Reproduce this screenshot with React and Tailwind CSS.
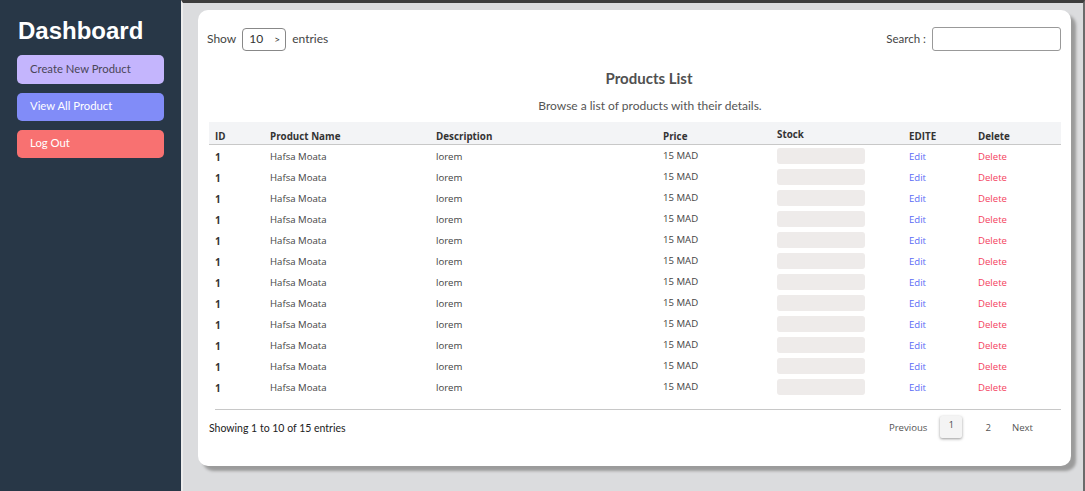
import React from "react";

const rows = Array.from({ length: 12 }, () => ({
  id: 1,
  name: "Hafsa Moata",
  desc: "lorem",
  price: "15 MAD",
}));

const cols = "grid grid-cols-[55px_166px_227px_114px_132px_69px_1fr] px-[6px]";

const Sidebar = () => (
  <aside className="w-[181px] shrink-0 bg-[#283747] px-[17px] pt-[17px] font-['Liberation_Sans',sans-serif]">
    <h1 className="text-[24px] font-bold leading-[28px] text-white pl-[1px]">Dashboard</h1>
    <div className="mt-[10px] flex flex-col gap-[9px] font-['Lato',sans-serif] text-[11.3px]">
      <button className="h-[29px] w-full rounded-[5px] bg-[#c4b5fd] pb-[1px] pl-[13px] text-left text-[#4a4658]">
        Create New Product
      </button>
      <button className="h-[28px] w-full rounded-[5px] bg-[#818cf8] pb-[1px] pl-[13px] text-left text-white">
        View All Product
      </button>
      <button className="h-[28px] w-full rounded-[5px] bg-[#f87171] pb-[1px] pl-[13px] text-left text-white">
        Log Out
      </button>
    </div>
  </aside>
);

export default function App() {
  return (
    <div className="flex h-[491px] w-[1085px] overflow-hidden">
      <Sidebar />
      <main className="flex-1 border-l-2 border-t-[3px] border-r-2 border-l-[#ececec] border-t-[#3d3d3d] border-r-[#6b6b6b] bg-[#dbdcde] pl-[15px] pt-[7px]">
        <div className="flex h-[456px] w-[873px] flex-col rounded-[10px] bg-white pl-[11px] pr-[10px] pt-[17px] shadow-[5px_5px_3px_#9b9b9b]">
          <div className="-ml-[2px] flex items-center justify-between font-['Lato',sans-serif] text-[12px] text-[#444]">
            <div className="flex items-center gap-[6px]">
              <span>Show</span>
              <div className="flex h-[23px] w-[44px] items-center gap-[11px] rounded-[4px] border border-[#888] pl-[6px] text-[12px] text-[#333]">
                <span>10</span>
                <span className="text-[10px]">&gt;</span>
              </div>
              <span>entries</span>
            </div>
            <div className="flex items-center gap-[6px]">
              <span className="text-[11.5px]">Search :</span>
              <input className="h-[24px] w-[129px] rounded-[3px] border border-[#999] outline-none" />
            </div>
          </div>

          <h2 className="mt-[16px] pl-[28px] text-center font-['Lato',sans-serif] text-[15px] font-bold text-[#505050]">
            Products List
          </h2>
          <p className="mt-[7px] pl-[30px] text-center font-['Lato',sans-serif] text-[12px] text-[#555]">
            Browse a list of products with their details.
          </p>

          <div className="mt-[7px] font-['Open_Sans',sans-serif] text-[9.6px]">
            <div className={`${cols} h-[23px] items-center border-b border-[#c8c8c8] bg-[#f3f4f6] text-[9.8px] font-bold text-[#333]`}>
              <span className="pt-[8px]">ID</span>
              <span className="pt-[8px]">Product Name</span>
              <span className="pt-[8px]">Description</span>
              <span className="pt-[8px]">Price</span>
              <span className="pt-[4px]">Stock</span>
              <span className="pt-[8px]">EDITE</span>
              <span className="pt-[8px]">Delete</span>
            </div>
            {rows.map((r, i) => (
              <div key={i} className={`${cols} h-[21px] items-center pt-[4px] text-[#444]`}>
                <span className="text-[10px] font-bold text-[#333]">{r.id}</span>
                <span>{r.name}</span>
                <span>{r.desc}</span>
                <span className="-mt-[2px]">{r.price}</span>
                <span className="-mt-[2px] h-[16px] w-[88px] rounded-[3px] bg-[#eeebea]" />
                <span className="text-[#5b6cf6]">Edit</span>
                <span className="text-[#f43f5e]">Delete</span>
              </div>
            ))}
          </div>

          <div className="ml-[6px] mt-[12px] border-t border-[#c8c8c8]" />

          <div className="mt-[6px] flex items-center justify-between text-[#222]">
            <span className="font-['Lato',sans-serif] text-[10.5px]">Showing 1 to 10 of 15 entries</span>
            <div className="mr-[28px] flex items-center font-['Open_Sans',sans-serif] text-[9.6px] text-[#555]">
              <span>Previous</span>
              <span className="mb-[4px] ml-[13px] flex h-[22px] w-[22px] items-start justify-center rounded-[2px] bg-[#f4f4f4] pt-[2px] text-[9px] text-[#444] shadow-[0_1px_3px_#999]">
                1
              </span>
              <span className="ml-[23px]">2</span>
              <span className="ml-[21px]">Next</span>
            </div>
          </div>
        </div>
      </main>
    </div>
  );
}
